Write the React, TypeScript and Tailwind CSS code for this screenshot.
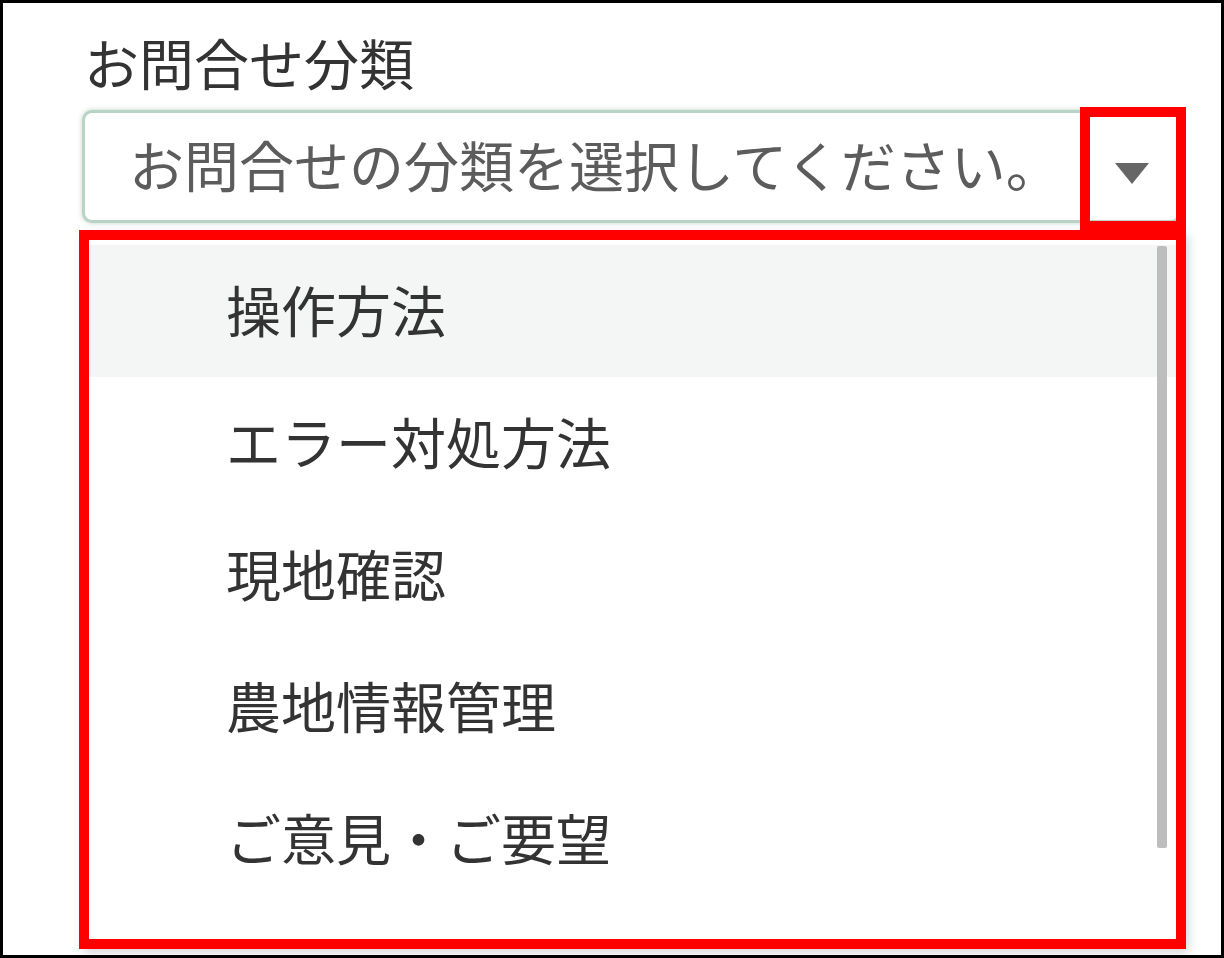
import React from "react";

const items = ["操作方法", "エラー対処方法", "現地確認", "農地情報管理", "ご意見・ご要望", "その他"];

export default function App() {
  return (
    <div
      className="relative w-[1224px] h-[958px] border-[3px] border-black bg-white overflow-hidden"
      style={{ fontFamily: '"Noto Sans CJK JP", "Noto Sans", sans-serif' }}
    >
      <div className="pl-[79px] pt-[31px]">
        <div className="text-[55px] leading-[55px] text-[#333] pl-[2px]">お問合せ分類</div>
        <div className="mt-[21px] w-[1099px] h-[113px] border-[3px] border-[#b7d4c5] rounded-[10px] shadow-[0_0_5px_rgba(110,160,130,0.45)] flex items-center justify-between pl-[44px] pr-[29px] bg-white">
          <span className="text-[55px] leading-[55px] text-[#5c5c5c] mb-[6px]">お問合せの分類を選択してください。</span>
          <svg width="34" height="21" viewBox="0 0 34 21" className="mt-[14px]">
            <polygon points="0,0 34,0 17,21" fill="#666" />
          </svg>
        </div>
        <div className="relative mt-[9px] w-[1104px] h-[717px] bg-white shadow-[2px_3px_10px_rgba(0,0,0,0.18)] pt-[13px] overflow-hidden">
          {items.map((t, i) => (
            <div
              key={t}
              className={
                "h-[132px] flex items-center pl-[144px] pb-[6px] text-[55px] leading-[55px] text-[#333] " +
                (i === 0 ? "bg-[#f3f6f5]" : "")
              }
            >
              {t}
            </div>
          ))}
          <div className="absolute left-[1075px] top-[14px] w-[10px] h-[602px] bg-[#bdbdbd] rounded-[2px]" />
        </div>
      </div>
      <div className="absolute left-[1077px] top-[104px] w-[106px] h-[124px] border-[10px] border-[#ff0000]" />
      <div className="absolute left-[76px] top-[227px] w-[1107px] h-[719px] border-[10px] border-[#ff0000]" />
    </div>
  );
}
